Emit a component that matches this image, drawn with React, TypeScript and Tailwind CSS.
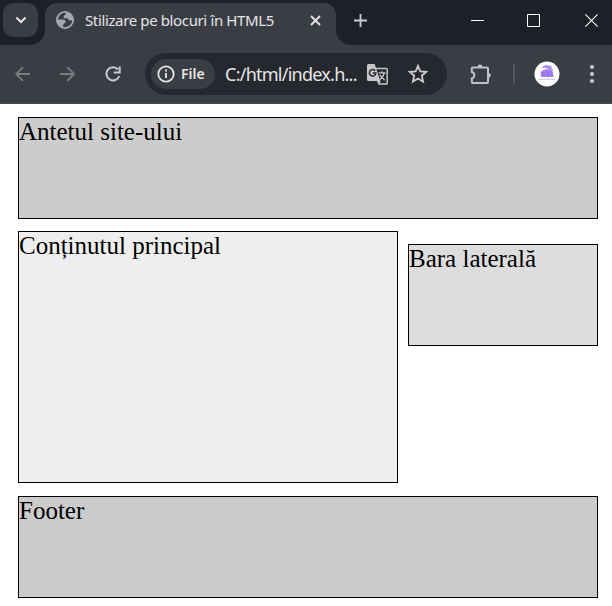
import React from 'react';

const ui = "font-['Noto_Sans','Open_Sans',sans-serif]";

function TabFlare({ side }: { side: 'left' | 'right' }) {
  return (
    <svg
      className={side === 'left' ? 'absolute bottom-0 -left-[15px]' : 'absolute bottom-0 -right-[15px] -scale-x-100'}
      width="15" height="15" viewBox="0 0 15 15"
    >
      <path d="M15 0V15H0C8.5 15 15 8.5 15 0Z" fill="#3b3d45" />
    </svg>
  );
}

function Globe() {
  return (
    <svg width="18" height="18" viewBox="0 0 18 18" className="shrink-0">
      <circle cx="9" cy="9" r="8.1" fill="none" stroke="#a1a7b2" strokeWidth="1.8" />
      <path d="M10 .7C13.8 1 17 4.5 17.2 8.3V9.3C15.5 9.2 14.5 9.7 13.4 9.4C12.3 9.1 12.1 7.3 11 7.2H7.7V5.5C7.7 4.6 8.5 4 9.5 4V2.8C9.5 1.8 10 1.6 10 .7Z" fill="#a1a7b2" />
      <path d="M1 8.6H6.3C8.5 8.6 9.9 9.8 9.9 11.7H8.4C8.2 12.6 8 13.5 7 13.6V16.8C3.5 16 1 13 .9 9Z" fill="#a1a7b2" />
    </svg>
  );
}

function TabStrip() {
  return (
    <div className="relative flex h-[45px] bg-[#1c2028] pl-[3px]">
      <div className="mt-[3px] flex h-[34px] w-[35px] items-center justify-center rounded-[11px] bg-[#3b3d45]">
        <svg width="12" height="8" viewBox="0 0 12 8" fill="none" stroke="#e7e5e4" strokeWidth="2">
          <path d="M1.4 1.5L6 6L10.6 1.5" />
        </svg>
      </div>
      <div className="relative ml-[7px] mt-[3px] flex h-[42px] w-[291px] rounded-t-[12px] bg-[#3b3d45] pl-[11px]">
        <TabFlare side="left" />
        <div className="mt-[8px] h-[18px]"><Globe /></div>
        <div className={`${ui} ml-[11px] mt-[6px] w-[225px] whitespace-nowrap text-[15px] leading-[22px] tracking-[-0.37px] text-[#e5e5e7]`}>
          Stilizare pe blocuri în HTML5
        </div>
        <svg className="mt-[12px]" width="11" height="11" viewBox="0 0 11 11" stroke="#e7e5e4" strokeWidth="1.8">
          <path d="M1 1L10 10M10 1L1 10" />
        </svg>
        <TabFlare side="right" />
      </div>
      <svg className="ml-[18px] mt-[14px]" width="13" height="13" viewBox="0 0 13 13" stroke="#c9cbd3" strokeWidth="1.8">
        <path d="M6.5 0V13M0 6.5H13" />
      </svg>
      <svg className="ml-[104px] mt-[14px]" width="13" height="13" viewBox="0 0 13 13" stroke="#fff">
        <path d="M0 6.5H13" />
      </svg>
      <svg className="ml-[43px] mt-[14px]" width="13" height="13" viewBox="0 0 13 13" fill="none" stroke="#fff">
        <path d="M.5 .5H12.5V12.5H.5Z" />
      </svg>
      <svg className="ml-[45px] mt-[14px]" width="13" height="13" viewBox="0 0 13 13" stroke="#fff" strokeWidth="1.1">
        <path d="M.4 .4L12.6 12.6M12.6 .4L.4 12.6" />
      </svg>
    </div>
  );
}

function Translate() {
  return (
    <svg width="21" height="21" viewBox="0 0 21 21" className="mt-[1px] shrink-0">
      <path d="M9 4.6H19.3Q20.2 4.6 20.2 5.5V19.2Q20.2 20.1 19.3 20.1H11.3" fill="#25282f" stroke="#c7c7c8" strokeWidth="1.5" />
      <path d="M1.5 0H7.7L9 4L13.3 17H1.5Q0 17 0 15.5V1.5Q0 0 1.5 0Z" fill="#c7c7c8" />
      <path d="M9.9 17L11.5 20.5L14 17Z" fill="#c7c7c8" />
      <path d="M11 6H19V16H13.3L10.7 8Z" fill="#25282f" />
      <path d="M8.1 6.8A3.2 3.2 0 1 0 8.8 9.1H5.7" fill="none" stroke="#25282f" strokeWidth="1.5" />
      <path d="M11.5 8.9H18.7M14.9 7.3V8.9M17.3 9C16.7 11.8 14.7 14 12.7 15.6M12.7 10.7C14.2 13.4 15.8 14.8 17.8 16.2" fill="none" stroke="#c7c7c8" strokeWidth="1.3" />
    </svg>
  );
}

function Avatar() {
  return (
    <svg width="26" height="26" viewBox="0 0 26 26" className="ml-[19px] shrink-0">
      <circle cx="13" cy="13" r="12.5" fill="#fff" />
      <path d="M8 6L12 4L17.5 5V7L19 9L14 8L12 6.7L8.5 7Z" fill="#a889ef" />
      <path d="M11 8H16L18.5 9.5H10Z" fill="#b9a0f5" />
      <path d="M6.5 11L9.5 9H18.5L19.5 16H7Z" fill="#a580f1" />
      <path d="M8 12H11M13 11H16M8 14H10M12 14H15M17 13H18" stroke="#8a63e3" />
      <path d="M4.5 18.3H21" stroke="#aaa4de" strokeWidth=".8" strokeDasharray="2 .5" />
    </svg>
  );
}

function Toolbar() {
  return (
    <div className="flex h-[59px] items-center border-b border-[#46434a] bg-[#3b3d45] pl-[15px]">
      <svg width="16" height="16" viewBox="0 0 16 16" fill="none" stroke="#7b7b82" strokeWidth="1.8">
        <path d="M15 8H1.5M8 1.2L1.2 8L8 14.8" />
      </svg>
      <svg className="ml-[29px]" width="16" height="16" viewBox="0 0 16 16" fill="none" stroke="#7b7b82" strokeWidth="1.8">
        <path d="M0 8H13.8M7.3 1.2L14.1 8L7.3 14.8" />
      </svg>
      <svg className="ml-[29px]" width="16" height="16" viewBox="0 0 16 16" fill="none" stroke="#c9cbd3" strokeWidth="2">
        <path d="M13 3.5A6.6 6.6 0 1 0 14.3 10M14.7 .5V6.4H8.7" />
      </svg>
      <div className="ml-[24px] flex h-[42px] w-[302px] items-center rounded-full bg-[#25282f] pl-[6px]">
        <div className="flex h-[30px] w-[64px] shrink-0 items-center rounded-full bg-[#3b3d45] pl-[6px]">
          <svg width="18" height="18" viewBox="0 0 18 18" fill="none" stroke="#e7e5e4">
            <circle cx="9" cy="9" r="7.7" strokeWidth="1.8" />
            <path d="M9 8V13M9 4.6V6.5" strokeWidth="1.9" />
          </svg>
          <span className={`${ui} ml-[6px] text-[14px] font-semibold leading-[20px] text-[#e7e5e4]`}>File</span>
        </div>
        <div className={`${ui} ml-[10px] w-[142px] shrink-0 whitespace-nowrap text-[18px] leading-[24px] tracking-[-0.75px] text-[#e7e5e4]`}>
          C:/html/index.h...
        </div>
        <Translate />
        <svg className="ml-[20px] shrink-0" width="20" height="20" viewBox="0 0 20 20" fill="none" stroke="#cecac8" strokeWidth="1.8">
          <path d="M10 1.8L12.3 7.3L18.3 7.8L13.8 11.7L15.1 17.7L10 14.5L4.9 17.7L6.2 11.7L1.7 7.8L7.7 7.3Z" />
        </svg>
      </div>
      <svg className="ml-[23px] shrink-0" width="22" height="21" viewBox="0 0 22 21">
        <path d="M2.5 3.5H17Q18 3.5 18 4.5V18Q18 19 17 19H2.5Q1.8 19 1.8 18V14.5Q4.3 13.8 4.3 11.2Q4.3 8.7 1.8 8V4.5Q1.8 3.5 2.5 3.5Z" fill="none" stroke="#bfc1c9" strokeWidth="2" />
        <path d="M7.5 3A2.4 2.4 0 0 1 12.3 3ZM18.2 8.7A2.5 2.5 0 0 1 18.2 13.7Z" fill="#bfc1c9" />
      </svg>
      <div className="ml-[21px] h-[20px] w-[2px] shrink-0 bg-[#53545c]" />
      <Avatar />
      <svg className="ml-[29px] shrink-0" width="6" height="20" viewBox="0 0 6 20" fill="#c9cbd3">
        <circle cx="3" cy="3" r="2" /><circle cx="3" cy="10" r="2" /><circle cx="3" cy="17" r="2" />
      </svg>
    </div>
  );
}

export default function App() {
  return (
    <div className="h-[606px] w-[612px] overflow-hidden bg-white">
      <TabStrip />
      <Toolbar />
      <div className="px-[18px] pt-[13px] font-['Liberation_Serif',serif] text-[25px] leading-[28px] text-black">
        <header className="h-[102px] w-[580px] border border-black bg-[#cccccc]">Antetul site-ului</header>
        <div className="mt-[12px] flex w-[580px] justify-between">
          <main className="h-[252px] w-[380px] border border-black bg-[#eeeeee]">Conținutul principal</main>
          <aside className="mt-[13px] h-[102px] w-[190px] border border-black bg-[#dddddd]">Bara laterală</aside>
        </div>
        <footer className="mt-[13px] h-[102px] w-[580px] border border-black bg-[#cccccc]">Footer</footer>
      </div>
    </div>
  );
}
